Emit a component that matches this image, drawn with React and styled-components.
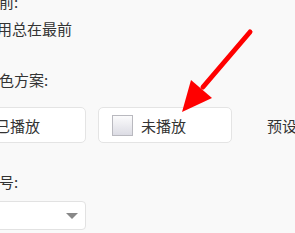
import React from "react";
import styled, { createGlobalStyle } from "styled-components";

const GlobalStyle = createGlobalStyle`
  html, body {
    margin: 0;
    padding: 0;
    background: #f9f9f9;
    overflow: hidden;
  }
  body {
    font-family: "Noto Sans CJK SC", "Noto Sans", sans-serif;
    color: #333;
  }
`;

const Page = styled.div`
  position: relative;
  width: 295px;
  height: 233px;
  overflow: hidden;
`;

const Panel = styled.div`
  display: flex;
  flex-direction: column;
  margin-left: -48px;
  margin-top: -8px;
`;

const Section = styled.div`
  display: flex;
  flex-direction: column;
  gap: ${(p) => p.gap}px;
  margin-bottom: ${(p) => p.after}px;
`;

const Label = styled.div`
  font-size: 15px;
  line-height: 20px;
  padding-left: 32px;
  white-space: nowrap;
`;

const Option = styled.div`
  font-size: 15px;
  line-height: 20px;
  padding-left: 30px;
  white-space: nowrap;
`;

const ButtonRow = styled.div`
  display: flex;
  align-items: center;
  gap: 12px;
`;

const ColorButton = styled.div`
  box-sizing: border-box;
  flex-shrink: 0;
  width: 134px;
  height: 36px;
  display: flex;
  align-items: center;
  gap: 8px;
  padding-left: 13px;
  background: #fff;
  border: 1px solid #e4e4e4;
  border-radius: 5px;
  font-size: 15px;
  white-space: nowrap;
`;

const Check = styled.span`
  box-sizing: border-box;
  width: 21px;
  height: 21px;
  border: 1px solid #b9b9bf;
  background: linear-gradient(#fbfbfc, #dcdce4);
  flex-shrink: 0;
`;

const Preset = styled.span`
  flex-shrink: 0;
  margin-left: 23px;
  font-size: 15px;
  white-space: nowrap;
`;

const Select = styled.div`
  box-sizing: border-box;
  width: 134px;
  height: 29px;
  display: flex;
  align-items: center;
  justify-content: flex-end;
  padding-right: 7px;
  background: #fff;
  border: 1px solid #e2e2e2;
  border-radius: 4px;
`;

const Caret = styled.span`
  width: 0;
  height: 0;
  border-left: 6px solid transparent;
  border-right: 6px solid transparent;
  border-top: 6px solid #888;
`;

const Arrow = styled.svg`
  position: absolute;
  left: 0;
  top: 0;
  pointer-events: none;
`;

export default function App() {
  return (
    <>
      <GlobalStyle />
      <Page>
        <Panel>
          <Section gap={7} after={31}>
            <Label>置前:</Label>
            <Option>使用总在最前</Option>
          </Section>
          <Section gap={17} after={29}>
            <Label>配色方案:</Label>
            <ButtonRow>
              <ColorButton>
                <Check />
                已播放
              </ColorButton>
              <ColorButton>
                <Check />
                未播放
              </ColorButton>
              <Preset>预设方案</Preset>
            </ButtonRow>
          </Section>
          <Section gap={9} after={0}>
            <Label>字号:</Label>
            <Select>
              <Caret />
            </Select>
          </Section>
        </Panel>
        <Arrow width="295" height="233" viewBox="0 0 295 233">
          <line
            x1="250"
            y1="32"
            x2="203"
            y2="87"
            stroke="#f00"
            strokeWidth="5"
            strokeLinecap="round"
          />
          <polygon points="182,112 191,80 212,98" fill="#f00" />
        </Arrow>
      </Page>
    </>
  );
}
